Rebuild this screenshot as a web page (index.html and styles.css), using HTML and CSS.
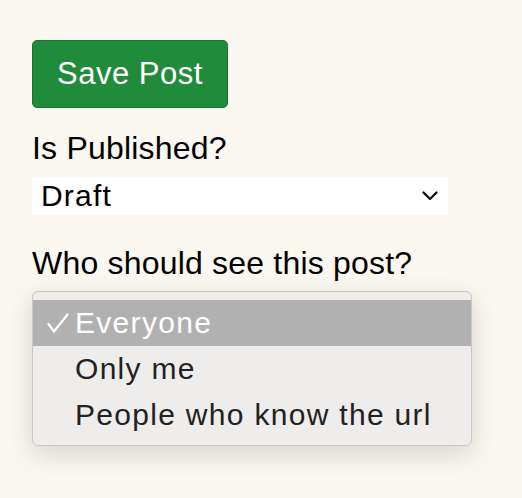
FILE: index.html
```html
<!DOCTYPE html>
<html lang="en">
<head>
    <meta charset="UTF-8">
    <title>Edit Post</title>
    <link rel="stylesheet" href="styles.css">
</head>
<body>
    <div class="post-form">
        <button type="button" class="save-button">Save Post</button>

        <label class="field-label">Is Published?</label>
        <div class="select-box">
            <span>Draft</span>
            <svg class="chevron" width="16" height="10" viewBox="0 0 16 10">
                <polyline points="1.5,1.5 8,8 14.5,1.5" fill="none" stroke="#111" stroke-width="2.4" stroke-linecap="round" stroke-linejoin="round"/>
            </svg>
        </div>

        <label class="field-label who-label">Who should see this post?</label>
        <!-- open dropdown menu -->
        <ul class="select-menu">
            <li class="selected">
                <svg class="check" width="22" height="20" viewBox="0 0 22 20">
                    <polyline points="1.5,11 7,18.5 20.5,1.5" fill="none" stroke="#fff" stroke-width="2.2" stroke-linecap="round" stroke-linejoin="round"/>
                </svg>
                Everyone
            </li>
            <li>Only me</li>
            <li>People who know the url</li>
        </ul>
    </div>
</body>
</html>
```

FILE: styles.css
```css
body {
    margin: 0;
    background-color: #faf6f0;
    font-family: "Liberation Sans", Arial, sans-serif;
    color: #000;
}

.post-form {
    padding: 40px 32px;
}

.save-button {
    display: block;
    width: 196px;
    height: 68px;
    padding: 0;
    border: 1px solid #1a7430;
    border-radius: 5px;
    background-color: #218b3c;
    color: #fff;
    font-family: "Liberation Sans", Arial, sans-serif;
    font-size: 31px;
    letter-spacing: 0.5px;
    cursor: pointer;
}

.field-label {
    display: block;
    margin-top: 22px;
    font-size: 32px;
    letter-spacing: 0.2px;
    line-height: 36px;
}

.select-box {
    display: flex;
    align-items: center;
    justify-content: space-between;
    box-sizing: border-box;
    width: 416px;
    height: 38px;
    margin-top: 11px;
    padding: 0 10px 0 9px;
    background-color: #fff;
    font-size: 30px;
    letter-spacing: 1.2px;
}

.who-label {
    margin-top: 30px;
}

.select-menu {
    list-style: none;
    box-sizing: border-box;
    width: 440px;
    margin: 10px 0 0;
    padding: 8px 0 7px;
    border: 1px solid #c9c7c3;
    border-radius: 6px;
    background-color: #eeedeb;
    box-shadow: 0 8px 26px rgba(0,0,0,0.14);
    color: #222;
    font-size: 30px;
    letter-spacing: 1.3px;
}

.select-menu li {
    position: relative;
    height: 46px;
    line-height: 46px;
    padding-left: 42px;
}

.select-menu li.selected {
    background-color: #b1b1b1;
    color: #fff;
}

.check {
    position: absolute;
    left: 14px;
    top: 13px;
}
```
